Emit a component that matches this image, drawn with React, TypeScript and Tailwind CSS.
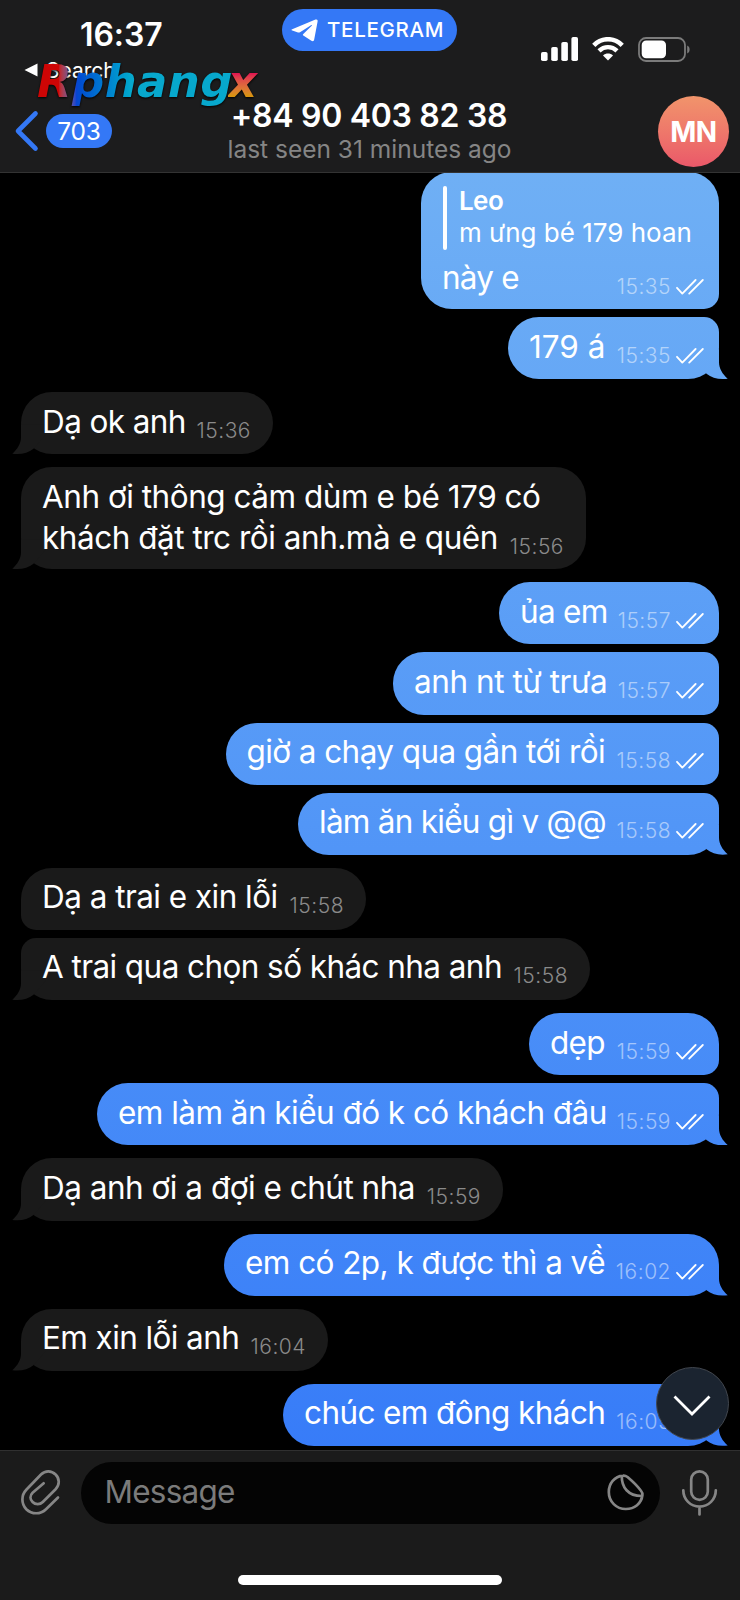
import React from 'react';
import clsx from 'clsx';

interface Message {
    lines: string[];
    time: string;
    out?: boolean;
    reply?: { name: string; text: string };
    // width and tracking of the bubble text
    className: string;
    joinTop?: boolean;
    joinBottom?: boolean;
}

const messages: Message[] = [
    {
        lines: ['này e'],
        time: '15:35',
        out: true,
        reply: { name: 'Leo', text: 'm ưng bé 179 hoan' },
        className: 'w-[298px] h-[137px] tracking-[-0.8px]',
        joinBottom: true,
    },
    { lines: ['179 á'], time: '15:35', out: true, className: 'w-[211px] tracking-[0px]', joinTop: true },
    { lines: ['Dạ ok anh'], time: '15:36', className: 'w-[252px] tracking-[-0.6px]' },
    {
        lines: ['Anh ơi thông cảm dùm e bé 179 có', 'khách đặt trc rồi anh.mà e quên'],
        time: '15:56',
        className: 'w-[565px] h-[102px] tracking-[-0.48px]',
    },
    { lines: ['ủa em'], time: '15:57', out: true, className: 'w-[220px] tracking-[-0.7px]', joinBottom: true },
    { lines: ['anh nt từ trưa'], time: '15:57', out: true, className: 'w-[326px] tracking-[-0.45px]', joinTop: true, joinBottom: true },
    { lines: ['giờ a chạy qua gần tới rồi'], time: '15:58', out: true, className: 'w-[493.5px] tracking-[-0.58px]', joinTop: true, joinBottom: true },
    { lines: ['làm ăn kiểu gì v @@'], time: '15:58', out: true, className: 'w-[421px] tracking-[-0.74px]', joinTop: true },
    { lines: ['Dạ a trai e xin lỗi'], time: '15:58', className: 'w-[345px] tracking-[-0.54px]', joinBottom: true },
    { lines: ['A trai qua chọn số khác nha anh'], time: '15:58', className: 'w-[569px] tracking-[-0.58px]', joinTop: true },
    { lines: ['dẹp'], time: '15:59', out: true, className: 'w-[190px] tracking-[-0.7px]', joinBottom: true },
    { lines: ['em làm ăn kiểu đó k có khách đâu'], time: '15:59', out: true, className: 'w-[622px] tracking-[-0.54px]', joinTop: true },
    { lines: ['Dạ anh ơi a đợi e chút nha'], time: '15:59', className: 'w-[482px] tracking-[-0.5px]' },
    { lines: ['em có 2p, k được thì a về'], time: '16:02', out: true, className: 'w-[495px] tracking-[-0.56px]' },
    { lines: ['Em xin lỗi anh'], time: '16:04', className: 'w-[307px] tracking-[-0.6px]' },
    { lines: ['chúc em đông khách'], time: '16:05', out: true, className: 'w-[436px] tracking-[-0.6px]' },
];

const outFill = 'bg-linear-to-b from-[#77b6f4] to-[#3175f8] bg-fixed';

function Checks() {
    return (
        <svg width="28" height="16" viewBox="0 0 28 16" fill="none" stroke="#fff" strokeWidth="1.8" strokeLinecap="round" strokeLinejoin="round" className="mt-[2px] ml-[5px]">
            <path d="M1 8.8 6.3 14.6 19.6 1M13.2 14.6 26.8 1" />
        </svg>
    );
}

function Bubble({ message }: { message: Message }) {
    const { lines, time, out, reply, className, joinTop, joinBottom } = message;

    return (
        <div
            className={clsx(
                'relative shrink-0 flex flex-col rounded-[31px] text-white',
                out ? 'self-end mr-[21px] pl-[21px] pr-[15px]' : 'self-start ml-[21px] pl-[21px] pr-[22px] bg-[#1a1a1a]',
                out && outFill,
                reply ? 'pt-[14px]' : 'pt-[8.5px]',
                !className.includes('h-[') && 'h-[62.15px]',
                joinTop ? 'mt-2' : 'mt-[13px]',
                joinTop && (out ? 'rounded-tr-[15px]' : 'rounded-tl-[15px]'),
                joinBottom && (out ? 'rounded-br-[15px]' : 'rounded-bl-[15px]'),
                className,
            )}
        >
            {!joinBottom && out && (
                <span className={clsx('absolute -right-[9px] bottom-0 w-[34px] h-[30px] [clip-path:path("M0_0H25V13C25_19_28.5_25_33.7_29.5C25_30.5_18_29_12.5_24.5L0_10Z")]', outFill)} />
            )}
            {!joinBottom && !out && (
                <span className="absolute -left-[9px] bottom-0 w-[34px] h-[30px] bg-[#1a1a1a] [clip-path:path('M34_0H9V13C9_19_5.5_25_0.3_29.5C9_30.5_16_29_21.5_24.5L34_10Z')]" />
            )}
            {reply && (
                <div className="flex h-[64px] mb-[7px] gap-[12px] text-[26px] leading-8 whitespace-nowrap">
                    <span className="w-[4px] ml-px rounded-full bg-white" />
                    <div className="pt-px -mt-[2px]">
                        <p className="font-semibold tracking-[-0.6px]">{reply.name}</p>
                        <p className="tracking-[0px]">{reply.text}</p>
                    </div>
                </div>
            )}
            {lines.map((line, index) => (
                <div key={index} className="relative flex justify-between h-[41px] text-[31.5px] leading-[41px] whitespace-nowrap">
                    <span>{line}</span>
                    {index === lines.length - 1 && (
                        <span className={clsx('flex mt-[20px] h-5 text-[21px] leading-5 tracking-[0.5px] font-[350]', out ? 'text-white/50' : 'text-[#8a8a8a]')}>
                            {time}
                            {out && <Checks />}
                        </span>
                    )}
                </div>
            ))}
        </div>
    );
}

function Header() {
    return (
        <header className="relative z-10 h-[173px] shrink-0 bg-[#1c1c1d] border-b border-[#333] text-white">
            <div className="flex h-[60px] items-start">
                <span className="w-[282px] pl-[80px] pt-[15px] text-[32px] leading-10 font-semibold tracking-[-0.1px]">16:37</span>
                <div className="flex items-center w-[175px] h-[42px] mt-[9px] pl-[9px] gap-[9px] rounded-full bg-[#3478f6]">
                    <svg width="27" height="23" viewBox="0 0 27 23" fill="#fff">
                        <path d="M1.2 10.2 24.5.6c1.5-.6 2.4.2 2.1 1.8L23.2 20.6c-.3 1.7-1.4 2.1-2.8 1.2l-8.1-5.4c-.6-.4-.6-1 0-1.5l8.4-8.2c.5-.6-.1-.9-.7-.5L9 13.2c-.6.4-1.3.4-2 .2l-5.7-1.8c-1.1-.4-1-1-.1-1.4Z" />
                    </svg>
                    <span className="pt-px text-[20.5px] font-[550] tracking-[0.7px]">TELEGRAM</span>
                </div>
                <svg width="37" height="24" viewBox="0 0 37 24" fill="#fff" className="mt-[37px] ml-[84px]">
                    <rect x="0" y="15" width="6.6" height="9" rx="1.8" />
                    <rect x="10.2" y="10" width="6.6" height="14" rx="1.8" />
                    <rect x="20.3" y="5" width="6.6" height="19" rx="1.8" />
                    <rect x="30.4" y="0" width="6.6" height="24" rx="1.8" />
                </svg>
                <svg width="32" height="24" viewBox="0 0 32 24" fill="none" stroke="#fff" className="mt-[37px] ml-[14px]">
                    <path d="M1.8 8.3C9.8.2 22.2.2 30.2 8.3" strokeWidth="4.6" />
                    <path d="M7 13.9C12.2 8.8 19.8 8.8 25 13.9" strokeWidth="4.4" />
                    <path d="M16 23.6 11 18.4C13.9 15.9 18.1 15.9 21 18.4Z" fill="#fff" stroke="none" />
                </svg>
                <svg width="53" height="25" viewBox="0 0 53 25" className="mt-[37px] ml-[14px]">
                    <rect x="1" y="1" width="46" height="23" rx="7" fill="none" stroke="#7b7b7b" strokeWidth="1.8" />
                    <rect x="3.7" y="3.5" width="24.3" height="17.7" rx="4.5" fill="#fff" />
                    <path d="M49.2 8.5C52.4 9.7 52.4 15.3 49.2 16.5Z" fill="#7b7b7b" />
                </svg>
            </div>
            <div className="flex items-center h-5 pl-6 gap-2">
                <svg width="14" height="14" viewBox="0 0 14 14" fill="#fff">
                    <path d="M.5 7 13.5.4V13.6Z" />
                </svg>
                <span className="pt-[2px] text-[21px] leading-5">Search</span>
            </div>
            <div className="flex pl-[14px]">
                <svg width="25" height="42" viewBox="0 0 25 42" fill="none" stroke="#3478f6" strokeWidth="4.6" strokeLinecap="round" strokeLinejoin="round" className="mt-[30px]">
                    <path d="M21.5 3.5 4 21 21.5 38.5" />
                </svg>
                <span className="flex items-center justify-center w-[66px] h-[34px] mt-[34px] ml-[7px] rounded-full bg-[#3478f6] text-[24.5px] tracking-[-0.2px]">703</span>
                <div className="flex flex-col items-center w-[282px] ml-[116px] mt-[16px] whitespace-nowrap">
                    <h1 className="text-[32px] leading-10 font-semibold tracking-[-0.3px]">+84 90 403 82 38</h1>
                    <p className="-mt-px pl-px text-[24.5px] leading-7 text-[#858585]">last seen 31 minutes ago</p>
                </div>
                <div className="flex items-center justify-center size-[71px] ml-[148px] mt-[16px] rounded-full bg-linear-to-b from-[#f1946b] to-[#ea5869] text-[28px] font-bold tracking-[-0.4px]">MN</div>
            </div>
            <div className="absolute left-[37px] top-[55px] flex font-['DejaVu_Sans'] text-[45px] leading-[54px] font-bold italic drop-shadow-[0_1px_1px_#000]">
                <span className="bg-linear-to-r from-[#d80606] from-11% via-[#0a48dc] via-20% to-[#08b2d8] to-48% bg-clip-text text-transparent opacity-95 tracking-[0.4px]">Rphang</span>
                <span className="bg-linear-to-b from-[#e01850] from-35% to-[#d89210] to-75% bg-clip-text text-transparent -ml-[5px] pr-1">x</span>
            </div>
        </header>
    );
}

function Composer() {
    return (
        <footer className="relative z-10 h-[150px] shrink-0 bg-[#1b1b1b] border-t border-[#303030]">
            <div className="flex pt-[11px]">
                <svg width="42" height="48" viewBox="0 0 42 48" fill="none" stroke="#868686" strokeWidth="2.7" strokeLinecap="round" className="ml-5 mt-[6px]">
                    <path d="M38 29.5 26 41.2C20.5 46.6 11.8 46.6 6.3 41.2 1.1 35.8 1.1 27.2 6.3 21.8L21 6.5C25.2 2.3 31.4 2.3 35.6 6.5 39.8 10.6 39.8 17 35.6 21.2L22.8 34C19.9 36.9 15.4 36.9 12.6 34 9.8 31.2 9.8 27.6 12.6 24.8L23.7 15.3" />
                </svg>
                <div className="flex justify-between w-[579px] h-[62px] ml-[18.5px] pl-[24px] pr-[15px] rounded-full bg-[#040404]">
                    <span className="pt-[9px] text-[31.5px] leading-[41px] tracking-[-0.75px] text-[#7b7b7b]">Message</span>
                    <svg width="39" height="39" viewBox="0 0 39 39" fill="none" stroke="#868686" strokeWidth="2.7" className="mt-[11px]">
                        <path d="M17 2.7C8.5 3.5 2.8 10.5 2.8 19 2.8 28.6 10.3 36 19.8 36 28.5 36 35.5 30.5 36.4 22 36.6 20.3 36 19 34.8 17.5 31 12.5 26 7.8 21.5 4 20 2.9 18.6 2.5 17 2.7Z" />
                        <path d="M15.8 3C15.5 14 22 23.3 36.3 23" />
                    </svg>
                </div>
                <svg width="38" height="48" viewBox="0 0 38 48" fill="none" stroke="#868686" strokeWidth="2.7" strokeLinecap="round" className="ml-[21.5px] mt-[6px]">
                    <rect x="10.2" y="3.3" width="16.6" height="28.5" rx="8.3" />
                    <path d="M2.3 22.3C2.3 31.5 9.5 38.6 18.5 38.6S34.8 31.5 34.8 22.3M18.5 39V46.5" />
                </svg>
            </div>
            <div className="w-[264px] h-[10px] mx-auto mt-[51px] rounded-full bg-white" />
        </footer>
    );
}

export default function App() {
    return (
        <div className="relative flex flex-col w-[740px] h-[1600px] overflow-hidden bg-black font-['Inter','Liberation_Sans',sans-serif]">
            <Header />
            <main className="flex flex-col h-[1277px] shrink-0 overflow-hidden">
                <div className="flex flex-col -mt-[14px]">
                    {messages.map((message, index) => (
                        <Bubble key={index} message={message} />
                    ))}
                </div>
            </main>
            <Composer />
            <button className="absolute z-20 left-[656px] top-[1367px] flex items-center justify-center size-[73px] rounded-full bg-[#1b2430] border border-[#41464e]">
                <svg width="38" height="22" viewBox="0 0 38 22" fill="none" stroke="#fff" strokeWidth="2.8" className="mt-[5px] -ml-[2px]">
                    <path d="M1.5 1.5 19 19 36.5 1.5" />
                </svg>
            </button>
        </div>
    );
}
